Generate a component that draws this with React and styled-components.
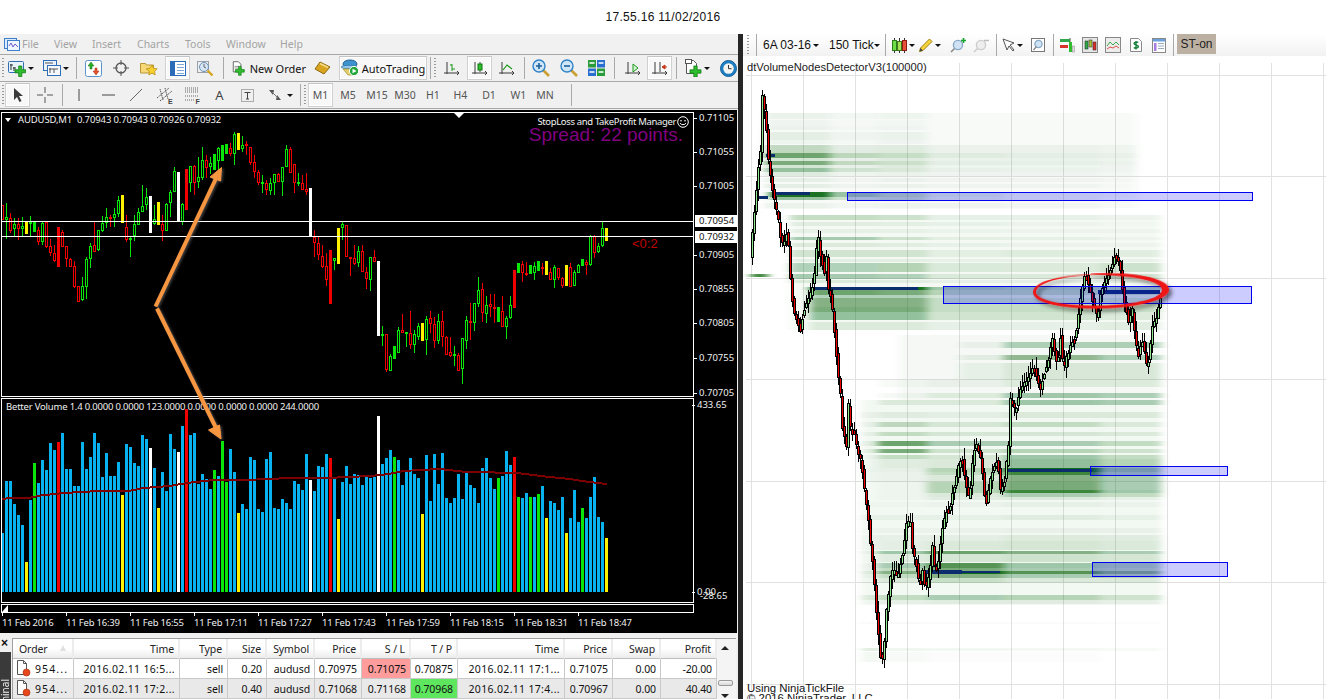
import React from 'react';
import styled, { createGlobalStyle } from 'styled-components';

const Global = createGlobalStyle`
  html, body { margin: 0; padding: 0; background: #fff; }
  * { box-sizing: border-box; }
  svg { display: block; }
`;

const ui = `"Noto Sans", "Liberation Sans", sans-serif`;
const arial = `"Liberation Sans", Arial, sans-serif`;

const Page = styled.div`
  width: 1326px; height: 699px; overflow: hidden; position: relative;
  display: flex; flex-direction: column; background: #fff; font-family: ${ui};
`;
const Caption = styled.div`
  height: 34px; flex: none; display: flex; align-items: center; justify-content: center;
  font: 12px ${arial}; color: #111; letter-spacing: .3px;
`;
const Workspace = styled.div`display: flex; flex: 1; min-height: 0;`;
const LeftWindow = styled.div`
  width: 738px; flex: none; background: #f0f0f0; display: flex; flex-direction: column; overflow: hidden;
`;
const Divider = styled.div`width: 5px; flex: none; background: #262626;`;
const RightWindow = styled.div`
  flex: 1; min-width: 0; position: relative; background: #fff; display: flex; flex-direction: column; overflow: hidden;
`;

/* ---------- MT4 menu and toolbars ---------- */
const MenuBar = styled.div`
  height: 21px; flex: none; display: flex; align-items: center; padding-left: 2px;
  border-bottom: 1px solid #a8a8a8; background: #f1f1f1;
`;
const MenuItem = styled.span`
  font-size: 10.5px; color: #a3a3a3; width: ${p => p.$w}px; flex: none;
`;
const ToolRow = styled.div`
  height: ${p => p.$h}px; flex: none; display: flex; align-items: center;
  border-bottom: 1px solid #a8a8a8; background: #f0f0f0;
`;
const Grip = styled.div`
  width: ${p => p.$w || 6}px; height: 20px; flex: none; display: flex; justify-content: center;
  &::before { content: ''; width: 2px; height: 100%;
    background: repeating-linear-gradient(to bottom, #9a9a9a 0 1px, transparent 1px 3px); }
`;
const Sep = styled.div`
  width: ${p => p.$w}px; height: 22px; flex: none; display: flex; justify-content: center;
  &::before { content: ''; width: 1px; height: 100%; background: #a9a9a9; }
`;
const Gap = styled.div`width: ${p => p.$w}px; flex: none;`;
const Tool = styled.div`
  width: ${p => p.$w}px; height: 24px; flex: none; display: flex; align-items: center; justify-content: center; gap: 2px;
  font-size: 10.5px; color: ${p => p.$dim ? '#555' : '#111'};
  ${p => p.$on && `border: 1px solid #d0d0d0; border-top-color:#c4c4c4; background: #f8f8f8; box-shadow: inset 0 0 0 1px #fff;`}
`;
const OrderTool = styled(Tool)`justify-content: flex-start; padding-left: 6px; gap: 5px;`;
const LetterTool = styled.span`font-size: 13px; color: #444;`;
const Caret = styled.i`
  width: 0; height: 0; flex: none; border-style: solid; border-width: 3px 3px 0 3px;
  border-color: #111 transparent transparent transparent; margin-left: ${p => p.$ml || 0}px;
`;
const ToolText = styled.span`font-size: 11px; color: #111; white-space: nowrap;`;

/* ---------- chart window ---------- */
const ChartWindow = styled.div`
  width: 737px; height: 523px; margin-top: 1px; flex: none; background: #000; position: relative;
  padding: 2px 0 0 1px; display: flex; flex-direction: column; color: #e8e8e8;
`;
const Pane = styled.div`
  width: 693px; height: ${p => p.$h}px; flex: none; position: relative;
  border: 1px solid #fff; margin-top: ${p => p.$mt || 0}px;
`;
const PaneLegend = styled.div`
  position: absolute; left: ${p => p.$x}px; top: ${p => p.$y}px; white-space: nowrap;
  font-size: 9.5px; line-height: 12px; color: #f0f0f0; display: flex; align-items: center;
  letter-spacing: ${p => p.$ls}px;
`;
const LegendMark = styled.i`
  width: 0; height: 0; margin-right: 7px; border-style: solid; border-width: 4px 3.5px 0 3.5px;
  border-color: #fff transparent transparent transparent;
`;
const TopMarker = styled.i`
  position: absolute; left: 452px; top: 0; width: 0; height: 0; border-style: solid; border-width: 5px 5px 0 5px;
  border-color: #fff transparent transparent transparent;
`;
const Manager = styled.div`
  position: absolute; right: 4px; top: 2px; display: flex; align-items: center; gap: 1px;
  font-size: 9.5px; color: #f4f4f4; white-space: nowrap; letter-spacing: -.35px;
`;
const Spread = styled.div`
  position: absolute; right: 10px; top: 11px; font: 19px ${arial}; color: #800080; white-space: nowrap;
`;
const Countdown = styled.div`
  position: absolute; left: 630px; top: 123px; font: 13px ${arial}; color: #c00000;
`;
const Axis = styled.div`
  position: absolute; left: 694px; top: 0; bottom: 0; width: 43px; pointer-events: none;
`;
const AxisLabel = styled.span`
  position: absolute; left: ${p => p.$x || 5}px; top: ${p => p.$y - 110 - 7}px; height: 14px; line-height: 14px;
  font-size: 9.5px; color: #f0f0f0; white-space: nowrap;
  ${p => p.$tick && `&::before { content:''; position:absolute; left:-5px; top:7px; width:3px; height:1px; background:#fff; }`}
`;
const PriceTag = styled.span`
  position: absolute; left: 1px; top: ${p => p.$y - 110 - 6}px; width: 42px; height: 12px; padding-left: 4px;
  background: #fff; color: #111; font-size: 9.5px; line-height: 12px;
`;
const ScrollStrip = styled.div`
  width: 693px; height: 9px; flex: none; margin-top: 1px; border: 1px solid #fff; position: relative;
  &::before { content:''; position:absolute; left:0; top:0; border-style: solid; border-width: 0 0 7px 6px;
    border-color: transparent transparent #fff transparent; }
`;
const TimeAxis = styled.div`display: flex; height: 20px; flex: none; margin-left: 1px;`;
const TimeCell = styled.div`
  width: 64px; flex: none; position: relative; font-size: 9.5px; line-height: 14px;
  white-space: nowrap; color: #f0f0f0; padding-top: 2px; letter-spacing: -.2px;
  &::before { content:''; position:absolute; left:0; top:0; width:1px; height:3px; background:#fff; }
  & > span { position: relative; top: 1px; }
`;
const Overlay = styled.svg`position: absolute; left: 0; top: 0; pointer-events: none;`;

/* ---------- terminal ---------- */
const Terminal = styled.div`display: flex; flex: 1; min-height: 0; padding-top: 5px;`;
const TermRail = styled.div`width: 12px; flex: none; display: flex; flex-direction: column; align-items: stretch;`;
const TermClose = styled.div`height: 14px; flex: none; font: bold 12px ${arial}; line-height: 11px; color: #111; padding-left: 1px;`;
const TermTab = styled.div`
  flex: 1; background: #3a3a3a; width: 11px; overflow: hidden; color: #eee; font-size: 10px; padding-top: 27px;
`;
const TermTabText = styled.div`
  writing-mode: vertical-rl; transform: rotate(180deg); line-height: 11px; white-space: nowrap;
`;
const OrderGrid = styled.div`
  width: 705px; flex: none; display: grid; border-left: 1px solid #a0a0a0; border-top: 1px solid #a0a0a0;
  grid-template-columns: 61px 106px 48px 39px 48px 47px 49px 47px 107px 48px 48px 56px;
  grid-auto-rows: 20px; background: #fff; font-size: 10.5px; letter-spacing: -.1px; color: #111; align-content: start;
`;
const HeadCell = styled.div`
  display: flex; align-items: center; justify-content: ${p => p.$left ? 'flex-start' : 'flex-end'};
  padding: 0 4px 0 6px; background: linear-gradient(#fff, #fff 50%, #ececec); color: #222;
  border-right: 2px solid #ececec; border-bottom: 1px solid #bdbdbd; position: relative; white-space: nowrap;
`;
const SortMark = styled.i`
  position: absolute; left: 47px; top: 6px; width: 0; height: 0; border-style: solid; border-width: 0 3.5px 6px 3.5px;
  border-color: transparent transparent #e0e0e0 transparent;
`;
const Cell = styled.div`
  display: flex; align-items: center; gap: 4px; justify-content: ${p => p.$left ? 'flex-start' : 'flex-end'};
  padding: 0 ${p => p.$left ? 0 : 4}px 0 ${p => p.$left ? 3 : 0}px; white-space: nowrap; overflow: hidden;
  background: ${p => p.$bg || (p.$alt ? '#e9e9e9' : '#fff')};
  border-right: 1px solid #c9c9c9; border-bottom: 1px solid #c9c9c9;
  letter-spacing: ${p => p.$ls ?? -.1}px;
`;
const VScroll = styled.div`
  width: 19px; flex: none; position: relative; background: #f4f4f4; border-top: 1px solid #a0a0a0;
`;
const ScrollArrow = styled.i`
  position: absolute; left: 4px; ${p => p.$up ? 'top: 7px; border-width: 0 4px 4px 4px; border-color: transparent transparent #222 transparent;' : 'bottom: 1px; border-width: 4px 4px 0 4px; border-color: #222 transparent transparent transparent;'}
  width: 0; height: 0; border-style: solid;
`;
const ScrollThumb = styled.i`
  position: absolute; left: 1px; top: 41px; width: 15px; height: 6px; border: 1px solid #9a9a9a; border-radius: 2px;
  background: linear-gradient(#f6f6f6, #d8d8d8);
`;

/* ---------- NinjaTrader ---------- */
const NinjaBar = styled.div`
  height: 22px; flex: none; display: flex; align-items: center; padding-left: 3px;
  background: linear-gradient(#ffffff, #f2f2f2);
`;
const NinjaText = styled.span`
  width: ${p => p.$w}px; flex: none; display: flex; align-items: center; justify-content: space-between;
  font: 12px ${arial}; color: #111; margin-left: ${p => p.$ml || 0}px; padding-left: 1px; padding-right: 1px; white-space: nowrap;
`;
const NinjaBtn = styled.div`
  width: 39px; height: 20px; flex: none; align-self: flex-start; background: #bcb0a2; color: #222;
  font: 12px ${arial}; display: flex; align-items: center; justify-content: center;
`;
const NinjaCanvas = styled.div`flex: 1; position: relative; min-height: 0;`;
const NinjaTitle = styled.div`
  position: absolute; left: 4px; top: 5px; font: 11.2px ${arial}; color: #222; white-space: nowrap;
`;
const NinjaFoot = styled.div`
  position: absolute; left: 4px; top: 627px; font: 11.4px/10px ${arial}; color: #111; white-space: nowrap;
`;

/* ---------- data ---------- */
const candles = `r285,330,285,330 g320,330,278,385 r325,362,310,370 g343,358,325,380 r342,358,325,392 g347,356,320,380 Y335,372,335,372 g335,342,318,382 G335,365,335,365 r360,397,350,405 g340,397,335,403 r335,412,335,412 r408,428,388,440 r428,452,405,455 R352,470,352,470 r365,410,360,410 r408,448,408,470 r448,470,445,472 r468,532,452,532 r528,575,528,575 g528,570,502,575 g447,530,440,565 g408,448,400,475 r405,425,335,425 g360,420,360,422 g340,362,318,365 g322,340,295,355 r320,322,315,352 g313,323,295,352 g270,313,258,322 Y255,340,255,340 r350,390,315,395 g383,388,380,440 g343,378,315,392 g305,345,295,345 g287,305,225,305 g262,285,235,300 W258,368,258,368 g328,342,285,345 Y277,345,277,345 r343,362,315,392 g282,362,280,365 g245,278,240,320 g183,245,172,245 W185,335,185,335 g283,335,280,345 R178,300,178,300 g168,218,168,245 r168,218,165,255 g200,215,140,232 g150,205,112,210 r150,173,135,205 g160,172,140,190 G132,180,132,180 g115,152,112,190 G105,153,105,153 G103,132,103,132 r115,132,100,140 g73,132,67,165 Y69,120,69,120 g105,117,78,125 r103,108,92,135 r110,160,110,165 r157,185,135,205 r185,218,180,225 g216,218,195,250 r218,240,210,255 g218,242,205,255 g193,218,193,255 r192,216,190,216 g172,215,170,258 g118,170,105,170 r118,190,112,190 r163,218,163,250 g216,220,190,230 r218,240,195,240 r238,245,190,255 W235,378,235,378 r380,400,360,442 r400,436,380,450 r438,472,405,475 r468,510,430,530 R420,582,420,582 g445,452,445,482 Y355,462,355,462 g343,355,332,390 r345,442,345,442 r442,445,440,497 r445,462,405,465 g423,460,408,470 r423,485,405,485 r485,508,470,535 g440,510,440,543 r442,455,420,455 W453,678,453,678 g672,675,648,708 r672,780,672,785 g738,782,732,782 G708,747,708,747 g660,728,652,728 r660,668,612,670 g665,667,665,710 r668,705,603,718 g672,705,660,728 g648,680,640,692 Y639,693,639,693 g628,690,618,735 r625,642,603,670 r642,692,620,712 g633,692,612,703 r633,682,603,712 r680,735,678,735 r727,738,682,742 g733,735,708,768 r735,782,730,785 g685,778,685,822 g630,692,618,717 r633,637,578,690 g580,638,578,662 g540,582,502,592 r538,610,520,637 g585,612,558,640 r583,590,552,622 r590,592,552,640 G590,635,590,635 r603,652,558,652 g625,652,618,687 g585,625,558,628 R480,593,480,593 G460,490,460,490 r462,488,453,515 r490,495,455,497 G466,493,466,493 g468,490,455,510 G453,482,453,482 r472,475,458,495 Y453,495,453,495 r487,510,475,512 g472,510,465,533 r473,505,473,508 r503,528,500,533 Y466,527,466,527 r470,530,460,530 g487,527,480,527 g466,488,462,490 G447,467,447,467 r456,465,450,495 g378,465,375,468 r378,428,375,445 g408,425,400,430 g355,408,333,410 Y354,392,354,392`
  .split(' ').map(s => ({ t: s[0], v: s.slice(1).split(',').map(n => 110 + Number(n) / 3) }));

const vols = `415 258 258 327 360 390 Y500 315 G204 265 195 225 144 165 R141 114 222 222 273 273 141 222 186 114 144 245 174 243 243 201 Y300 147 156 204 213 120 132 W159 219 Y339 231 288 117 162 W171 93 R42 120 114 267 237 252 282 G225 243 G138 G261 162 231 Y354 327 342 186 195 342 351 192 171 339 342 312 324 342 258 267 285 177 W255 288 213 216 177 R189 252 Y372 261 213 267 237 240 270 246 249 247 W63 207 189 165 G186 195 270 231 189 237 249 Y357 180 318 177 267 174 309 324 309 237 312 234 270 279 324 219 189 249 282 G249 243 168 210 R186 G306 309 294 G306 306 G297 273 Y369 318 324 345 306 Y414 369 285 381 G339 369 306 246 366 381 Y429`
  .split(' ').map(s => /\d/.test(s[0]) ? { t: 'B', z: Number(s) } : { t: s[0], z: Number(s.slice(1)) });

const palette = { g: '#0ae60a', G: '#0ae60a', r: '#f00000', R: '#f00000', Y: '#fff200', W: '#ffffff', B: '#08b2ee' };

const maPts = [[7,312],[35,308],[90,308],[120,302],[170,296],[240,291],[300,288],[390,287],[430,279],[510,273],[560,264],[640,255],[720,256],[800,252],[900,248],[1000,248],[1110,243]]
  .map(([x, y]) => [x / 3, 395 + y / 3])
  .concat([[50,238],[100,228],[150,225],[210,222],[280,230],[360,232],[450,235],[530,245],[600,252],[650,260],[710,267]].map(([x, y]) => [370 + x / 3, 395 + y / 3]));

const priceTicks = [['0.71105', 118], ['0.71055', 152], ['0.71005', 186], ['0.70905', 255], ['0.70855', 289], ['0.70805', 323], ['0.70755', 358], ['0.70705', 393]];
const times = ['11 Feb 2016', '11 Feb 16:39', '11 Feb 16:55', '11 Feb 17:11', '11 Feb 17:27', '11 Feb 17:43', '11 Feb 17:59', '11 Feb 18:15', '11 Feb 18:31', '11 Feb 18:47'];

const heads = [['Order', 1], ['Time'], ['Type'], ['Size'], ['Symbol'], ['Price'], ['S / L'], ['T / P'], ['Time'], ['Price'], ['Swap'], ['Profit']];
const rows = [
  ['954...', '2016.02.11 16:5...', 'sell', '0.20', 'audusd', '0.70975', '0.71075', '0.70875', '2016.02.11 17:1...', '0.71075', '0.00', '-20.00'],
  ['954...', '2016.02.11 17:2...', 'sell', '0.40', 'audusd', '0.71068', '0.71168', '0.70968', '2016.02.11 17:4...', '0.70967', '0.00', '40.40'],
];
const cellSpacing = ci => (ci === 0 ? 1.1 : ci === 1 || ci === 8 ? .32 : undefined);

/* Ninja price path: [x, y] */
const path = [[751,245],[752,230],[755,200],[757,175],[760,150],[761,120],[762,96],[764,110],[766,130],[768,160],[771,180],[773,195],[776,210],[779,225],[781,245],[785,240],[787,225],[789,265],[791,290],[793,310],[796,320],[800,330],[803,310],[807,300],[811,290],[815,270],[817,230],[820,255],[824,270],[827,250],[828,290],[830,295],[833,320],[835,340],[837,370],[840,395],[841,420],[843,435],[846,445],[848,405],[851,440],[853,425],[855,440],[857,450],[860,460],[862,470],[864,490],[868,520],[870,545],[873,570],[875,600],[878,635],[881,665],[884,640],[886,610],[889,590],[890,578],[893,570],[897,575],[901,560],[906,525],[910,520],[912,550],[916,565],[919,585],[922,570],[925,590],[929,575],[932,545],[935,575],[938,560],[942,530],[946,510],[950,505],[953,490],[957,470],[961,455],[965,480],[967,490],[969,500],[973,450],[977,445],[981,460],[985,505],[989,485],[993,465],[997,460],[1000,490],[1004,480],[1008,445],[1010,400],[1015,410],[1020,390],[1027,380],[1033,367],[1040,387],[1047,363],[1052,337],[1057,367],[1060,337],[1063,370],[1070,343],[1075,337],[1078,313],[1082,287],[1085,272],[1090,290],[1097,320],[1100,293],[1107,277],[1115,253],[1120,270],[1123,297],[1128,320],[1132,310],[1137,357],[1142,340],[1147,368],[1152,327],[1157,313],[1160,297]];

const interp = x => {
  for (let i = 1; i < path.length; i++) {
    if (x <= path[i][0]) {
      const [x0, y0] = path[i - 1], [x1, y1] = path[i];
      return y0 + (y1 - y0) * (x - x0) / (x1 - x0);
    }
  }
  return path[path.length - 1][1];
};
const seeded = s => () => { s = (s * 16807) % 2147483647; return s / 2147483647; };
const ninjaCandles = (() => {
  const rnd = seeded(4242), out = [];
  for (let x = 752; x <= 1160; x += 2) {
    const a = interp(x - 2) + (rnd() - .5) * 5, b = interp(x) + (rnd() - .5) * 5;
    const top = Math.min(a, b), bot = Math.max(a, b);
    out.push({
      x, top: Math.round(top), h: Math.max(4, Math.round(bot - top)), up: b < a,
      wt: Math.round(top - 1 - rnd() * 10), wb: Math.round(bot + 1 + rnd() * 10),
    });
  }
  return out;
})();

const heat = [
 [113,6,.05,.04,0,0,0],[120,6,.03,.02,0,0,0],[126,4,.05,.03,0,0,0],[132,8,.08,.05,0,0,0],[140,4,.04,.03,0,0,0],
 [145,8,.22,.1,.05,.05,.04],[153,5,.6,.2,.1,.08,.06],[158,3,.15,.1,.05,.05,.04],[161,4,.55,.18,.08,.07,.05],[165,3,.15,.1,.04,.04,.03],
 [168,4,.4,.12,.06,.05,.03],[172,4,.1,.05,.03,.03,.02],[178,4,.07,.05,.03,.03,.02],[184,4,.08,.05,.03,.03,.01],
 [192,5,.95,.25,.1,.04,.02,770],[197,3,.4,.2,.08,.03,0,770],[203,6,.05,.04,.03,.02,0],
 [215,5,.2,.16,.06,.05,.03,790],[222,4,.08,.07,.05,.04,.02,790],[229,4,.06,.05,.04,.03,.03,790],[237,3,.32,.16,.07,.06,.03,790],[243,4,.1,.08,.05,.04,.03,790],
 [250,7,.15,.15,.07,.09,.08,790],[259,3,.07,.07,.05,.05,.05,790],[263,9,.28,.26,.11,.1,.16,790],[274,5,.32,.28,.11,.1,.15,790],[280,3,.1,.08,.06,.06,.06,790],
 [287,3,1,1,.35,.3,.3,810],[290,5,.6,.55,.25,.25,.25,810],[295,3,.28,.28,.12,.12,.12,810],[298,9,.5,.5,.2,.2,.2,810],[307,5,.55,.55,.2,.2,.18,810],[312,8,.4,.4,.15,.15,.1,810],[322,8,.1,.1,.06,.06,.08,810],
 [342,6,.02,.02,.05,.3,.3,960],[355,5,.03,.03,.08,.45,.3,960],[363,17,.02,.02,.06,.12,.12,960],[380,7,.02,.03,.05,.1,.1,880],[393,5,.02,.04,.1,.35,.3,880],
 [400,5,.03,.1,.1,.35,.3,880],[412,6,.04,.08,.06,.1,.1],[422,5,.05,.22,.12,.2,.1],[432,4,.05,.2,.12,.12,.1],
 [441,5,.08,.6,.3,.3,.2],[449,4,.08,.55,.15,.25,.15],[455,4,.03,.2,.12,.35,.2],[459,9,.02,.08,.1,.4,.25],[468,4,.03,.05,.25,1,.4],[472,3,.02,.03,.2,.8,.3],[475,7,.02,.03,.1,.5,.3],
 [482,8,0,.02,.25,.55,.3],[490,3,0,.02,.25,.8,.35],[493,4,0,.02,.1,.3,.2],[497,3,0,.02,.07,.1,.05],[502,5,.02,.02,.03,.05,.03],[515,5,.05,.05,.05,.08,.05],[528,5,.02,.03,.03,.04,.04],
 [535,6,.03,.05,.06,.09,.08],[541,9,.03,.06,.1,.12,.1],[551,3,.06,.35,.6,.5,.3],[554,8,.02,.08,.12,.15,.12],[563,5,.04,.3,.7,.35,.3],[568,3,.03,.2,.55,.3,.25],[571,3,.1,.5,1,.7,.5],[574,4,.05,.2,.5,.3,.25],[578,5,.02,.1,.18,.1,.1],
 [595,5,.1,.2,.3,.25,.15],[600,4,.02,.05,.08,.07,.05],[622,2,.03,.03,.02,.02,.01],[648,3,.12,.06,.05,.04,.03],[652,10,.05,.03,.01,.01,0],
];
const veils = [[765,113,371,95,.03],[790,215,370,115,.045],[900,335,261,65,.04],[862,400,299,205,.05]];
const cuts = [760, 878, 927, 1004, 1100, 1161];
const topCut = 1136;
const startOf = (y, s) => s ?? (y < 210 ? 765 : y < 330 ? 800 : y < 400 ? 900 : 862);

const navy = [[766,154,9,3],[755,196,13,3],[775,192,35,3],[813,287,105,3],[1005,469,87,3],[925,570,37,4],[962,571,38,2],[1098,290,62,4]];
const boxes = [[847,192,405,8],[943,286,308,17],[1090,466,137,9],[1092,562,135,14]];
const gridX = Array.from({ length: 12 }, (_, i) => 751 + 52 * i);
const gridY = [75, 176, 278, 379, 481, 582, 684];

/* ---------- icons ---------- */
const Ico = ({ w = 16, h = 16, children }) => <svg width={w} height={h} viewBox={`0 0 ${w} ${h}`}>{children}</svg>;
const Plus = ({ x = 0, y = 0, s = 1 }) => (
  <path transform={`translate(${x} ${y}) scale(${s})`} d="M3.5 0h3v3.5H10v3H6.5V10h-3V6.5H0v-3h3.5z" fill="#2fbd2f" stroke="#0c7a0c" strokeWidth=".7" />
);
const Logo = () => (
  <Ico w={16} h={14}>
    <rect x=".5" y="1.5" width="12" height="10" fill="#dcecff" stroke="#3d7fc9" />
    <rect x="3.5" y="3.5" width="12" height="10" fill="#eef6ff" stroke="#3d7fc9" />
    <path d="M5 9l2-3 2 4 2-3 3 3" fill="none" stroke="#6b5bd0" />
  </Ico>
);
const NewChart = () => (
  <Ico w={18} h={17}>
    <rect x=".5" y="1.5" width="15" height="11" rx="1" fill="#e8f2fc" stroke="#2f6db5" />
    <path d="M3 4v6M2 5h3M6 7v4M5 8h3" stroke="#333" fill="none" />
    <Plus x={7} y={6} s={1.05} />
  </Ico>
);
const Profiles = () => (
  <Ico w={18} h={16}>
    <rect x=".5" y=".5" width="13" height="10" fill="#eaf3fc" stroke="#2f6db5" />
    <rect x="4.5" y="5.5" width="13" height="10" fill="#f5f9fe" stroke="#2f6db5" />
    <path d="M2 3h8M7 8v5M6 9h9M11 9v4" stroke="#555" fill="none" />
  </Ico>
);
const MarketWatch = () => (
  <Ico w={17} h={17}>
    <rect x=".5" y=".5" width="16" height="16" rx="2" fill="#fff" stroke="#5b93cc" />
    <path d="M6 2l3 4H7v3H5V6H3z" fill="#25b025" stroke="#127012" strokeWidth=".5" />
    <path d="M11 15l-3-4h2V8h2v3h2z" fill="#e8522a" stroke="#a02c10" strokeWidth=".5" />
  </Ico>
);
const Target = () => (
  <Ico w={16} h={16}>
    <circle cx="8" cy="8" r="5" fill="none" stroke="#555" strokeWidth="1.3" />
    <path d="M8 0v5M8 11v5M0 8h5M11 8h5" stroke="#555" />
  </Ico>
);
const FolderStar = () => (
  <Ico w={18} h={16}>
    <path d="M.5 3.5h5l1 1.5h7v8h-13z" fill="#f6d878" stroke="#b89636" />
    <path d="M12 5l1.6 3.3 3.6.5-2.6 2.5.6 3.6-3.2-1.7-3.2 1.7.6-3.6L6.2 8.8l3.6-.5z" fill="#f7cf2e" stroke="#b08a12" strokeWidth=".7" />
  </Ico>
);
const Navigator = () => (
  <Ico w={16} h={15}>
    <rect x=".5" y=".5" width="15" height="14" fill="#fff" stroke="#2b6cb8" />
    <rect x="1" y="1" width="4" height="13" fill="#2b6cb8" />
    <path d="M7 3.5h7M7 6.5h7M7 9.5h7M7 12.5h7" stroke="#7aa9d8" />
  </Ico>
);
const ZoomDoc = () => (
  <Ico w={18} h={17}>
    <rect x="1.5" y="1.5" width="11" height="11" fill="#eef0f2" stroke="#9aa0a8" />
    <circle cx="8" cy="7" r="4.5" fill="#d5e6f7" stroke="#6f90b0" />
    <path d="M8 4v3l2 1" stroke="#666" fill="none" />
    <path d="M11.5 10.5l5 5" stroke="#d7a421" strokeWidth="2.4" />
  </Ico>
);
const NewOrder = () => (
  <Ico w={15} h={17}>
    <path d="M1.5.5h6l3 3v9h-9z" fill="#fff" stroke="#555" />
    <path d="M3 6h5M3 8h5" stroke="#888" />
    <Plus x={4} y={6} s={1.05} />
  </Ico>
);
const Book = () => (
  <Ico w={17} h={14}>
    <path d="M6 1l10 5-6 7L1 8z" fill="#d9a520" stroke="#8f6a10" />
    <path d="M6 2.5l8 4" stroke="#f6de8c" strokeWidth="1.4" />
  </Ico>
);
const AutoIcon = () => (
  <Ico w={19} h={18}>
    <ellipse cx="9" cy="5" rx="7" ry="4" fill="#3d93cf" stroke="#20608f" />
    <ellipse cx="8" cy="8" rx="8" ry="1.7" fill="#8fc4ea" stroke="#2a6f9e" strokeWidth=".7" />
    <path d="M2 10l5 6h6l2-6z" fill="#e2cf6b" stroke="#a08f32" strokeWidth=".7" />
    <circle cx="13" cy="12" r="4.6" fill="#22a83a" stroke="#fff" />
    <path d="M11.5 9.8l4 2.2-4 2.2z" fill="#fff" />
  </Ico>
);
const axes = <path d="M3 1v12M0 12h15M13 10l2 2-2 2" fill="none" stroke="#3a3a3a" />;
const BarChart = () => <Ico w={16} h={15}>{axes}<path d="M8 3v7M8 4H6M8 8h3" stroke="#1a9a1a" fill="none" /></Ico>;
const CandleChart = () => <Ico w={16} h={15}>{axes}<path d="M8 1v10" stroke="#444" /><rect x="6" y="3" width="4" height="6" fill="#2fbd2f" stroke="#0c7a0c" /></Ico>;
const LineChart = () => <Ico w={16} h={15}>{axes}<path d="M4 9l4-5 5 4" fill="none" stroke="#1a9a1a" strokeWidth="1.2" /></Ico>;
const ScrollChart = () => <Ico w={16} h={15}>{axes}<path d="M8 3l5 4-5 4z" fill="#d2f2d2" stroke="#1a9a1a" /></Ico>;
const ShiftChart = () => <Ico w={16} h={15}>{axes}<path d="M8 1v10" stroke="#3a3a3a" /><path d="M15 6H10M10 6l3-2v4z" stroke="#c43a18" fill="#c43a18" /></Ico>;
const Zoom = ({ minus }) => (
  <Ico w={18} h={18}>
    <path d="M11 11l6 6" stroke="#caa033" strokeWidth="2.6" />
    <circle cx="7" cy="7" r="6" fill="#cfe6f8" stroke="#2f82c5" strokeWidth="1.4" />
    <path d={minus ? 'M4 7h6' : 'M4 7h6M7 4v6'} stroke="#1d5f99" strokeWidth="1.6" />
  </Ico>
);
const Tile = () => (
  <Ico w={17} h={16}>
    <rect width="8" height="7.5" fill="#2a9c3c" /><rect x="9" width="8" height="7.5" fill="#2a6fd0" />
    <rect y="8.5" width="8" height="7.5" fill="#2a6fd0" /><rect x="9" y="8.5" width="8" height="7.5" fill="#2a9c3c" />
    <path d="M1.5 3h5M10.5 3h5M1.5 12h5M10.5 12h5" stroke="#fff" strokeWidth="1.6" />
  </Ico>
);
const Templates = () => (
  <Ico w={17} h={18}>
    <path d="M1.5 1.5h7l3 3v10h-10z" fill="#fff" stroke="#555" />
    <rect x=".5" y=".5" width="6" height="4" fill="#fff" stroke="#555" />
    <Plus x={5} y={7} s={1.1} />
  </Ico>
);
const Clock = () => (
  <Ico w={17} h={17}>
    <circle cx="8.5" cy="8.5" r="8" fill="#1f7fc4" stroke="#175f96" />
    <circle cx="8.5" cy="8.5" r="5.2" fill="#f4f4f0" />
    <path d="M8.5 5v3.7h3" stroke="#333" fill="none" />
  </Ico>
);
const Cursor = () => <Ico w={12} h={16}><path d="M2 1v12l3-3 2.5 5 2-1-2.5-5h4z" fill="#3b3b3b" /></Ico>;
const Cross = () => <Ico w={16} h={16}><path d="M8 0v6M8 10v6M0 8h6M10 8h6" stroke="#555" /></Ico>;
const VLine = () => <Ico w={4} h={14}><path d="M2 1v12" stroke="#444" /></Ico>;
const HLine = () => <Ico w={13} h={4}><path d="M0 2h13" stroke="#444" /></Ico>;
const Trend = () => <Ico w={14} h={14}><path d="M1 13L13 1" stroke="#666" /></Ico>;
const Channel = () => (
  <Ico w={18} h={17}>
    <path d="M1 11L13 1M4 14L16 4M4 2l3 11M9 1l3 11" stroke="#555" strokeDasharray="1.4 .7" fill="none" />
    <text x="12" y="16.5" fontSize="7" fontWeight="700" fill="#444" fontFamily={arial}>E</text>
  </Ico>
);
const Fibo = () => (
  <Ico w={17} h={17}>
    <path d="M1 1h13M1 3h13M1 5h13M1 9h13M1 13h10" stroke="#666" strokeDasharray="1 1" />
    <text x="11.5" y="16.5" fontSize="7" fontWeight="700" fill="#444" fontFamily={arial}>F</text>
  </Ico>
);
const TextBox = () => (
  <Ico w={13} h={13}>
    <rect x=".5" y=".5" width="12" height="12" fill="none" stroke="#666" strokeDasharray="1 1" />
    <path d="M3.5 3.5h6M6.5 3.5v6.5M5 10h3" stroke="#444" fill="none" />
  </Ico>
);
const Arrows = () => (
  <Ico w={14} h={14}>
    <path d="M1 2l5 0-1 5zM13 12l-5 0 1-5z" fill="#555" />
    <path d="M4 4l6 6" stroke="#777" />
  </Ico>
);
const NCandles = () => (
  <Ico w={15} h={15}>
    <path d="M2.5 0v15M7.5 0v15M12.5 0v15" stroke="#333" />
    <rect x=".5" y="2.5" width="4" height="10" fill="#6fdc4a" stroke="#2c7a1a" />
    <rect x="5.5" y="3.5" width="4" height="9" fill="#a6e05a" stroke="#3c7a1a" />
    <rect x="10.5" y="2.5" width="4" height="10" fill="#e8503a" stroke="#8a1c10" />
  </Ico>
);
const Pencil = () => (
  <Ico w={14} h={14}>
    <path d="M10.5 1l2.5 2.5-9 9-3.5 1 1-3.5z" fill="#f5d33a" stroke="#a07f12" />
    <path d="M.5 13.5l1-3.5 2.5 2.5z" fill="#444" />
  </Ico>
);
const NZoom = ({ kind }) => (
  <Ico w={16} h={15}>
    <path d="M1 14l4-4" stroke={kind === 'minus' ? '#ccc' : '#8a8a8a'} strokeWidth="1.6" />
    <circle cx="8" cy="7" r="4.6" fill={kind === 'minus' ? '#eee' : '#cfe3f5'} stroke={kind === 'minus' ? '#ccc' : '#8aa9c8'} strokeWidth="1.4" />
    {kind === 'plus'
      ? <path d="M13.5 0v5M11 2.5h5" stroke="#15a32a" strokeWidth="1.6" />
      : <path d="M11 2.5h5" stroke="#bbb" strokeWidth="1.4" />}
  </Ico>
);
const NCursor = () => <Ico w={13} h={14}><path d="M1 1l4 11 2-4 4 5 1-1-4-5 4-2z" fill="#fff" stroke="#555" /></Ico>;
const NZoomBox = () => (
  <Ico w={14} h={14}>
    <rect x=".5" y=".5" width="13" height="13" fill="#fff" stroke="#777" />
    <circle cx="7.5" cy="6" r="3.6" fill="#cfe3f5" stroke="#8aa9c8" strokeWidth="1.3" />
    <path d="M2.5 12l3-3.5" stroke="#888" strokeWidth="1.3" />
  </Ico>
);
const NBars = () => (
  <Ico w={16} h={16}>
    <path d="M11 1v14" stroke="#555" />
    <rect x="1" y="2" width="10" height="3" fill="#2fa84a" /><rect x="1" y="8" width="8" height="3" fill="#d9322a" />
    <rect x="10" y="5" width="3" height="10" fill="#2fbd2f" /><rect x="13.5" y="9" width="2" height="6" fill="#ddd" stroke="#888" strokeWidth=".5" />
  </Ico>
);
const NFrameCandles = () => (
  <Ico w={16} h={16}>
    <rect x=".5" y=".5" width="15" height="15" fill="#e6e6e6" stroke="#888" />
    <rect x="3" y="4" width="3" height="8" fill="#2fa84a" stroke="#222" strokeWidth=".5" />
    <rect x="7" y="3" width="3" height="7" fill="#a7c53a" stroke="#222" strokeWidth=".5" />
    <rect x="11" y="5" width="3" height="8" fill="#d9322a" stroke="#222" strokeWidth=".5" />
  </Ico>
);
const NFrameLines = () => (
  <Ico w={16} h={16}>
    <rect x=".5" y=".5" width="15" height="15" fill="#ececec" stroke="#888" />
    <path d="M2 9l3-4 3 3 3-3 3 3" fill="none" stroke="#3aa84a" />
    <path d="M2 12l3-2 3 1 3-2 3 2" fill="none" stroke="#d9524a" />
  </Ico>
);
const NDollar = () => (
  <Ico w={12} h={14}>
    <path d="M.5.5h8l3 3v10h-11z" fill="#fff" stroke="#888" />
    <path d="M8.2 4.6C7.4 3.8 4 3.8 4 5.6s4.4 1 4.4 3-3.6 1.8-4.6.9M6 3v8.5" fill="none" stroke="#15803a" strokeWidth="1.4" />
  </Ico>
);
const NSheet = () => (
  <Ico w={14} h={15}>
    <rect x=".5" y=".5" width="13" height="14" fill="#fff" stroke="#888" />
    <rect x="1" y="1" width="12" height="2.5" fill="#6aa0dc" />
    <rect x="2" y="5" width="2.5" height="8" fill="#a77be0" />
    <path d="M6 5.5h6M6 8h6M6 10.5h6" stroke="#9ab" />
  </Ico>
);
const OrderDoc = () => (
  <Ico w={15} h={17}>
    <path d="M1.5.5h6l3 3v11h-9z" fill="#fff" stroke="#555" />
    <path d="M7.5.5v3h3" fill="none" stroke="#555" />
    <circle cx="10.5" cy="12.5" r="3.5" fill="#e8471c" stroke="#a02c10" strokeWidth=".6" />
  </Ico>
);
const Smiley = () => (
  <Ico w={12} h={12}>
    <circle cx="6" cy="6" r="5.3" fill="none" stroke="#fff" />
    <circle cx="4" cy="4.7" r=".8" fill="#fff" /><circle cx="8" cy="4.7" r=".8" fill="#fff" />
    <path d="M3 7.2c1 1.9 5 1.9 6 0" fill="none" stroke="#fff" />
  </Ico>
);

/* ---------- chart drawings ---------- */
const PriceChart = () => (
  <svg width={691} height={283} viewBox="2 113 691 283" shapeRendering="crispEdges">
    {candles.map((c, i) => {
      const x = 1 + 4 * i;
      const [top, bot, wt, wb] = c.v;
      const col = palette[c.t];
      const yT = Math.round(top), h = Math.max(1, Math.round(bot) - yT);
      return (
        <g key={i}>
          <rect x={x + 1} y={Math.round(wt)} width={1} height={Math.max(1, Math.round(wb - wt))} fill={col} />
          {c.t === c.t.toLowerCase()
            ? <rect x={x + .5} y={yT + .5} width={2} height={Math.max(1, h - 1)} fill="#000" stroke={col} />
            : <rect x={x} y={yT} width={3} height={h} fill={col} />}
        </g>
      );
    })}
    <rect x="2" y="221" width="691" height="1" fill="#fff" />
    <rect x="2" y="236" width="691" height="1" fill="#fff" />
  </svg>
);
const VolumeChart = () => (
  <svg width={691} height={203} viewBox="2 399 691 203">
    <g shapeRendering="crispEdges">
      {vols.map((v, i) => {
        const y = Math.round(395 + v.z / 3);
        return <rect key={i} x={1 + 4 * i} y={y} width={3} height={592 - y} fill={palette[v.t]} />;
      })}
    </g>
    <polyline points={maPts.map(p => p.join(',')).join(' ')} fill="none" stroke="#7d0000" strokeWidth="2" shapeRendering="crispEdges" />
  </svg>
);
const arrowPaint = '#f7963f';
const ArrowsOverlay = () => (
  <Overlay width={737} height={523} viewBox="0 110 737 523">
    <defs>
      <filter id="aShadow" x="-20%" y="-20%" width="140%" height="140%">
        <feDropShadow dx="1.5" dy="1" stdDeviation="1.2" floodColor="#777" floodOpacity=".55" />
      </filter>
    </defs>
    <g filter="url(#aShadow)" fill={arrowPaint} stroke={arrowPaint} strokeLinejoin="round">
      <path d="M155.5 306.5L219 172" fill="none" strokeWidth="4" />
      <path d="M221.5 167.5L210 177 220.5 181z" strokeWidth="1" />
      <path d="M157 308.5L219 434" fill="none" strokeWidth="4" />
      <path d="M221 439L208.5 430 219.5 425z" strokeWidth="1" />
    </g>
  </Overlay>
);
const NinjaChart = () => (
  <svg width={583} height={643} viewBox="743 56 583 643">
    <defs>
      <filter id="heatBlur" filterUnits="userSpaceOnUse" x="740" y="100" width="500" height="600">
        <feGaussianBlur stdDeviation="4 .7" />
      </filter>
      <filter id="ringShadow" x="-10%" y="-40%" width="120%" height="200%">
        <feDropShadow dx="3" dy="3" stdDeviation="2" floodColor="#000" floodOpacity=".55" />
      </filter>
    </defs>
    <g shapeRendering="crispEdges" fill="#e1e1e1">
      {gridX.map(x => <rect key={x} x={x} y="63" width="1" height="636" />)}
      {gridY.map(y => <rect key={y} x="746" y={y} width="580" height="1" />)}
    </g>
    <g filter="url(#heatBlur)" fill="#0f6a14">
      {veils.map(([x, y, w, h, a]) => <rect key={y} x={x} y={y} width={w} height={h} fillOpacity={a} />)}
      {heat.map((r, i) => {
        const [y, h, a1, a2, a3, a4, a5, st] = r;
        const alphas = [a1, a2, a3, a4, a5];
        const start = startOf(y, st);
        return alphas.map((a, k) => {
          const x0 = Math.max(cuts[k], start);
          const end = k === 4 && y < 210 ? topCut : cuts[k + 1];
          if (!(a > 0 && end > x0)) return null;
          if (k === 0 && y < 210) {
            return (
              <g key={`${i}-${k}`}>
                <rect x={x0} y={y} width={830 - x0} height={h} fillOpacity={a} />
                <rect x={830} y={y} width={end - 830} height={h} fillOpacity={a * .4} />
              </g>
            );
          }
          return <rect key={`${i}-${k}`} x={x0} y={y} width={end - x0} height={h} fillOpacity={a} />;
        });
      })}
      <rect x="751" y="274" width="17" height="3" fillOpacity=".8" />
    </g>
    <g shapeRendering="crispEdges" fill="#0b2d6e">
      {navy.map((n, i) => <rect key={i} x={n[0]} y={n[1]} width={n[2]} height={n[3]} />)}
    </g>
    <g shapeRendering="crispEdges">
      {ninjaCandles.map((c, i) => (
        <g key={i}>
          <rect x={c.x} y={c.wt} width="1" height={c.wb - c.wt} fill="#000" />
          <rect x={c.x - .5} y={c.top + .5} width="2" height={c.h} fill={c.up ? '#90e890' : '#f00000'} stroke="#000" />
        </g>
      ))}
    </g>
    <g shapeRendering="crispEdges" fill="#0000ff" fillOpacity=".2" stroke="#0000f0">
      {boxes.map((b, i) => <rect key={i} x={b[0] + .5} y={b[1] + .5} width={b[2]} height={b[3]} />)}
    </g>
    <path filter="url(#ringShadow)" fill="#ef1414" fillRule="evenodd" transform="rotate(-1.2 1100 291)"
      d="M1091 273.5C1140 272 1169 281 1169 291c0 10-30 17.5-68 17.5s-68-7-68-17.5c0-10 24-16.5 58-17l0 .7C1060 275.5 1036 282 1036 291c0 8 28 14.5 64 14.5s62-6 62-14.5c0-8-27-15.5-71-16.5z" />
  </svg>
);

const App = () => (
  <Page>
    <Global />
    <Caption>17.55.16 11/02/2016</Caption>
    <Workspace>
      <LeftWindow>
        <MenuBar>
          <Gap $w={2} /><Logo /><Gap $w={2} />
          {[['File', 32], ['View', 38], ['Insert', 45], ['Charts', 48], ['Tools', 41], ['Window', 54], ['Help', 40]].map(([t, w]) => <MenuItem key={t} $w={w}>{t}</MenuItem>)}
        </MenuBar>
        <ToolRow $h={27}>
          <Grip />
          <Tool $w={29}><NewChart /><Caret /></Tool>
          <Gap $w={6} />
          <Tool $w={30}><Profiles /><Caret /></Tool>
          <Sep $w={10} />
          <Tool $w={24}><MarketWatch /></Tool>
          <Tool $w={32}><Target /></Tool>
          <Tool $w={24}><FolderStar /></Tool>
          <Gap $w={4} />
          <Tool $w={25} $on><Navigator /></Tool>
          <Tool $w={30}><ZoomDoc /></Tool>
          <Sep $w={6} />
          <OrderTool $w={80}><NewOrder /><ToolText>New Order</ToolText></OrderTool>
          <Tool $w={33}><Book /></Tool>
          <Tool $w={88} $on><AutoIcon /><ToolText>AutoTrading</ToolText></Tool>
          <Sep $w={6} />
          <Grip $w={4} />
          <Tool $w={29}><BarChart /></Tool>
          <Gap $w={1} />
          <Tool $w={25} $on><CandleChart /></Tool>
          <Tool $w={30}><LineChart /></Tool>
          <Sep $w={4} />
          <Tool $w={29}><Zoom /></Tool>
          <Tool $w={28}><Zoom minus /></Tool>
          <Tool $w={27}><Tile /></Tool>
          <Sep $w={8} />
          <Tool $w={29}><ScrollChart /></Tool>
          <Tool $w={25} $on><ShiftChart /></Tool>
          <Sep $w={8} />
          <Tool $w={34}><Templates /><Caret /></Tool>
          <Tool $w={28}><Clock /></Tool>
        </ToolRow>
        <ToolRow $h={27}>
          <Grip $w={5} />
          <Tool $w={25} $on><Cursor /></Tool>
          <Tool $w={30}><Cross /></Tool>
          <Sep $w={4} />
          <Tool $w={30}><VLine /></Tool>
          <Tool $w={28}><HLine /></Tool>
          <Tool $w={28}><Trend /></Tool>
          <Tool $w={29}><Channel /></Tool>
          <Tool $w={27}><Fibo /></Tool>
          <Tool $w={27}><LetterTool>A</LetterTool></Tool>
          <Tool $w={29}><TextBox /></Tool>
          <Tool $w={36}><Arrows /><Caret $ml={3} /></Tool>
          <Sep $w={4} />
          <Grip $w={6} />
          <Tool $w={25} $on $dim>M1</Tool>
          {[['M5', 30], ['M15', 28], ['M30', 28], ['H1', 28], ['H4', 27], ['D1', 30], ['W1', 29], ['MN', 24]].map(([t, w]) => <Tool key={t} $w={w} $dim>{t}</Tool>)}
          <Sep $w={28} />
        </ToolRow>
        <ChartWindow>
          <Pane $h={285}>
            <PriceChart />
            <PaneLegend $x={3} $y={1} $ls={-.12}><LegendMark />AUDUSD,M1&nbsp;&nbsp;0.70943 0.70943 0.70926 0.70932</PaneLegend>
            <TopMarker />
            <Manager>StopLoss and TakeProfit Manager<Smiley /></Manager>
            <Spread>Spread: 22 points.</Spread>
            <Countdown>&lt;0:2</Countdown>
          </Pane>
          <Pane $h={205} $mt={1}>
            <VolumeChart />
            <PaneLegend $x={4} $y={2} $ls={-.2}>Better Volume 1.4 0.0000 0.0000 123.0000 0.0000 0.0000 0.0000 244.0000</PaneLegend>
          </Pane>
          <ScrollStrip />
          <TimeAxis>{times.map(t => <TimeCell key={t}><span>{t}</span></TimeCell>)}</TimeAxis>
          <Axis>
            {priceTicks.map(([t, y]) => <AxisLabel key={t} $y={y} $tick>{t}</AxisLabel>)}
            <PriceTag $y={221}>0.70954</PriceTag>
            <PriceTag $y={237}>0.70932</PriceTag>
            <AxisLabel $x={3} $y={405} $tick>433.65</AxisLabel>
            <AxisLabel $x={3} $y={592} $tick>0.00</AxisLabel>
            <AxisLabel $x={6} $y={596}>-28.65</AxisLabel>
          </Axis>
          <ArrowsOverlay />
        </ChartWindow>
        <Terminal>
          <TermRail>
            <TermClose>×</TermClose>
            <TermTab><TermTabText>Terminal</TermTabText></TermTab>
          </TermRail>
          <OrderGrid>
            {heads.map(([t, left], i) => (
              <HeadCell key={i} $left={left}>{t}{left && <SortMark />}</HeadCell>
            ))}
            {rows.map((r, ri) => r.map((t, ci) => (
              <Cell key={`${ri}-${ci}`} $left={ci === 0} $alt={ri === 1} $ls={cellSpacing(ci)}
                $bg={ri === 0 && ci === 6 ? '#ff9c9c' : ri === 1 && ci === 7 ? '#5ee65e' : undefined}>
                {ci === 0 && <OrderDoc />}{t}
              </Cell>
            )))}
          </OrderGrid>
          <VScroll>
            <ScrollArrow $up /><ScrollThumb /><ScrollArrow />
          </VScroll>
        </Terminal>
      </LeftWindow>
      <Divider />
      <RightWindow>
        <NinjaBar>
          <Grip $w={4} />
          <Sep $w={12} />
          <NinjaText $w={58}>6A 03-16<Caret /></NinjaText>
          <NinjaText $w={51} $ml={8}>150 Tick<Caret /></NinjaText>
          <Sep $w={12} />
          <Tool $w={24}><NCandles /><Caret /></Tool>
          <Tool $w={30}><Pencil /><Caret /></Tool>
          <Tool $w={25}><NZoom kind="plus" /></Tool>
          <Tool $w={22}><NZoom kind="minus" /></Tool>
          <Sep $w={8} />
          <Tool $w={25}><NCursor /><Caret /></Tool>
          <Tool $w={25}><NZoomBox /></Tool>
          <Sep $w={6} />
          <Tool $w={22}><NBars /></Tool>
          <Tool $w={24}><NFrameCandles /></Tool>
          <Tool $w={22}><NFrameLines /></Tool>
          <Tool $w={23}><NDollar /></Tool>
          <Tool $w={23}><NSheet /></Tool>
          <Sep $w={7} />
          <NinjaBtn>ST-on</NinjaBtn>
        </NinjaBar>
        <NinjaCanvas>
          <NinjaChart />
          <NinjaTitle>dtVolumeNodesDetectorV3(100000)</NinjaTitle>
          <NinjaFoot>Using NinjaTickFile<br />© 2016 NinjaTrader, LLC</NinjaFoot>
        </NinjaCanvas>
      </RightWindow>
    </Workspace>
  </Page>
);

export default App;
